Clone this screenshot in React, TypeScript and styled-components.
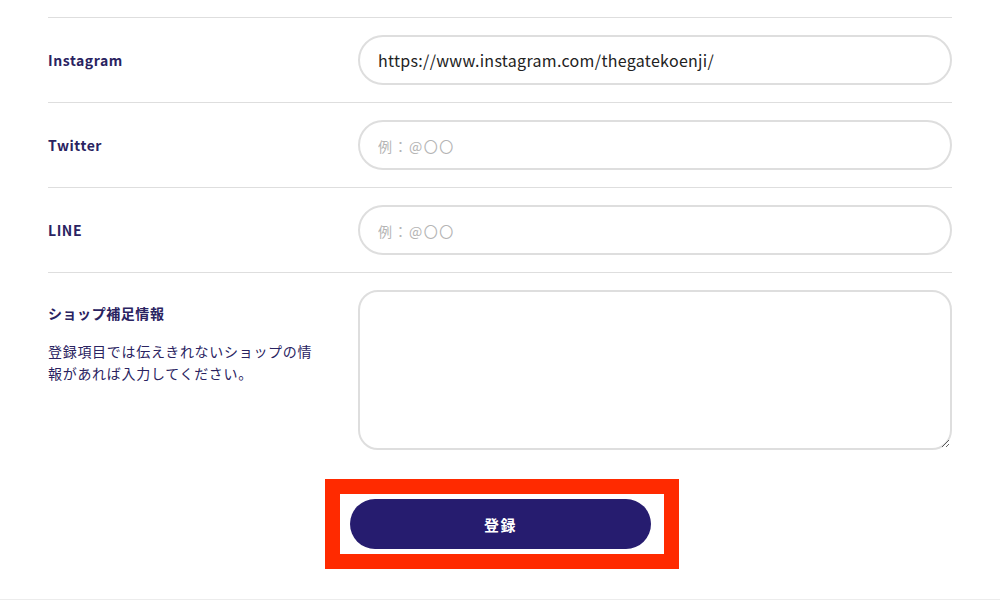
import React from "react";
import styled, { createGlobalStyle } from "styled-components";

const Global = createGlobalStyle`
  html, body { margin: 0; padding: 0; background: #ffffff; }
  body { font-family: "Noto Sans CJK JP", "Noto Sans", sans-serif; overflow: hidden; }
  * { box-sizing: border-box; }
`;

const Page = styled.div`
  width: 1000px;
  margin-top: -67px;
`;

const Form = styled.div`
  margin: 0 48px;
`;

const Row = styled.div<{ $top?: boolean; $first?: boolean }>`
  display: grid;
  grid-template-columns: 310px 1fr;
  align-items: ${(p) => (p.$top ? "start" : "center")};
  padding: 17px 0;
  border-top: ${(p) => (p.$first ? "none" : "1px solid #dedede")};
`;

const LabelCol = styled.div<{ $top?: boolean }>`
  padding-top: ${(p) => (p.$top ? "13px" : "0")};
`;

const Label = styled.div`
  color: #2a2361;
  font-size: 14px;
  font-weight: 700;
  line-height: 20px;
  letter-spacing: 0.04em;
`;

const Note = styled.p`
  margin: 17px 0 0;
  max-width: 270px;
  color: #2a2361;
  font-size: 14px;
  line-height: 22px;
  letter-spacing: 0.05em;
`;

const Input = styled.input`
  width: 100%;
  height: 50px;
  border: 2px solid #dedede;
  border-radius: 25px;
  padding: 0 18px;
  font-family: "Noto Sans CJK JP", "Noto Sans", sans-serif;
  font-size: 16px;
  letter-spacing: 0.3px;
  color: #222;
  background: #fff;
  outline: none;
  &::placeholder {
    color: #b4b4b4;
    font-size: 14px;
    letter-spacing: 1.5px;
  }
`;

const TextArea = styled.textarea`
  display: block;
  width: 100%;
  height: 160px;
  border: 2px solid #dedede;
  border-radius: 20px;
  padding: 14px 18px;
  font-family: "Noto Sans CJK JP", "Noto Sans", sans-serif;
  font-size: 15px;
  background: #fff;
  outline: none;
`;

const Actions = styled.div`
  display: flex;
  justify-content: center;
  padding: 27px 0 45px;
`;

const Highlight = styled.div`
  margin-left: 4px;
  outline: 15px solid #ff2a00;
  background: #fff;
  padding: 5px 13px 5px 10px;
`;

const Submit = styled.button`
  display: block;
  width: 301px;
  height: 50px;
  border: none;
  border-radius: 25px;
  background: #261c6f;
  color: #fff;
  font-family: "Noto Sans CJK JP", "Noto Sans", sans-serif;
  font-size: 15px;
  font-weight: 700;
  letter-spacing: 0.1em;
  cursor: pointer;
`;

const Footer = styled.div`
  border-top: 1px solid #ececec;
  background: #fafafa;
  height: 40px;
`;

export default function App() {
  return (
    <>
      <Global />
      <Page>
        <Form>
          <Row $first>
            <LabelCol />
            <Input readOnly defaultValue="" />
          </Row>
          <Row>
            <LabelCol>
              <Label>Instagram</Label>
            </LabelCol>
            <Input readOnly defaultValue="https://www.instagram.com/thegatekoenji/" />
          </Row>
          <Row>
            <LabelCol>
              <Label>Twitter</Label>
            </LabelCol>
            <Input readOnly placeholder="例：@〇〇" />
          </Row>
          <Row>
            <LabelCol>
              <Label>LINE</Label>
            </LabelCol>
            <Input readOnly placeholder="例：@〇〇" />
          </Row>
          <Row $top>
            <LabelCol $top>
              <Label>ショップ補足情報</Label>
              <Note>登録項目では伝えきれないショップの情報があれば入力してください。</Note>
            </LabelCol>
            <TextArea readOnly />
          </Row>
        </Form>
        <Actions>
          <Highlight>
            <Submit>登録</Submit>
          </Highlight>
        </Actions>
        <Footer />
      </Page>
    </>
  );
}
